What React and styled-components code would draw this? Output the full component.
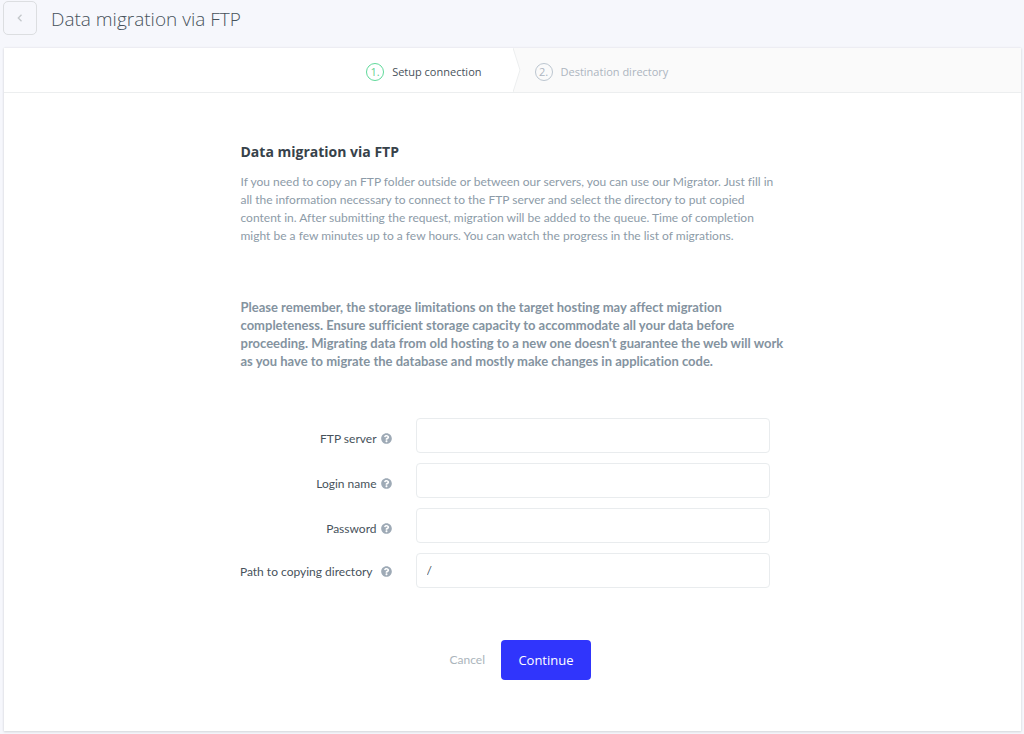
import React, { useState } from 'react'
import styled, { createGlobalStyle } from 'styled-components'
import { FaQuestionCircle } from 'react-icons/fa'

const GlobalStyle = createGlobalStyle`
  * {
    box-sizing: border-box;
  }
  body {
    margin: 0;
    background: #f6f7fc;
    color: #47525b;
    font-family: Lato, 'Open Sans', sans-serif;
    font-size: 12px;
    font-variant-ligatures: none;
    line-height: 18px;
  }
  button, input {
    font: inherit;
    font-variant-ligatures: none;
  }
`
const Page = styled.div`
  display: flex;
  flex-direction: column;
  min-height: 100vh;
  padding: 1px 3px 3px 4px;
`
const TopBar = styled.header`
  display: flex;
  align-items: center;
  gap: 14px;
  height: 34px;
  margin-bottom: 13px;
`
const BackButton = styled.button`
  display: flex;
  align-items: center;
  justify-content: center;
  width: 34px;
  height: 34px;
  margin-left: -1px;
  padding: 0;
  border: 1px solid #dcdee1;
  border-radius: 5px;
  background: transparent;
  color: #c3c7cb;
`
const PageTitle = styled.h1`
  margin: 0;
  padding-top: 2px;
  font-family: 'Open Sans', sans-serif;
  font-size: 19px;
  font-weight: 300;
  line-height: 26px;
`
const Panel = styled.main`
  flex: 1;
  background: #fff;
  box-shadow: 0 0 2px #dfe1e5, 0 1px 2px #d3d5d8;
`
const Steps = styled.ol`
  display: flex;
  margin: 0;
  padding: 0;
  height: 45px;
  border-bottom: 1px solid #eceeef;
  list-style: none;
`
const Step = styled.li`
  display: flex;
  align-items: center;
  justify-content: ${props => (props.$active ? 'flex-end' : 'flex-start')};
  gap: 8px;
  width: 50%;
  padding-top: 3px;
  padding-right: ${props => (props.$active ? '31px' : '0')};
  background: ${props => (props.$active ? '#fff' : '#fafafa')};
  color: ${props => (props.$active ? '#47525b' : '#adb5bf')};
  font-family: 'Open Sans', sans-serif;
  font-size: 11px;
`
const StepNumber = styled.span`
  display: flex;
  align-items: center;
  justify-content: center;
  width: 18px;
  height: 18px;
  border: 1px solid ${props => (props.$active ? '#5fd99a' : '#bcc6d0')};
  border-radius: 50%;
  color: ${props => (props.$active ? '#5fd08f' : '#adb5bf')};
`
const Arrow = styled.svg`
  flex: none;
  width: 8px;
  height: 44px;
  margin: -3px 6px 0 0;
`
const Content = styled.section`
  width: 544px;
  max-width: 100%;
  margin: 0 auto;
  padding: 49px 0 51px;
`
const Heading = styled.h2`
  margin: 0 0 11px;
  color: #37424a;
  font-family: 'Open Sans', sans-serif;
  font-size: 14px;
  font-weight: 700;
  line-height: 20px;
`
const Text = styled.p`
  margin: 0 0 53px;
  color: #8d9ba8;
  white-space: nowrap;
`
const Warning = styled(Text)`
  margin-bottom: 48px;
  color: #84939f;
  font-size: 13px;
  font-weight: 700;
`
const Form = styled.form`
  display: flex;
  flex-direction: column;
  gap: 10px;
`
const Row = styled.div`
  display: grid;
  grid-template-columns: 151px 354px;
  column-gap: 24px;
  align-items: center;
`
const Label = styled.label`
  display: flex;
  align-items: center;
  justify-content: flex-end;
  gap: ${props => (props.$wide ? '8px' : '4px')};
  padding-top: ${props => (props.$wide ? '2px' : '6px')};
  white-space: nowrap;
`
const HelpIcon = styled(FaQuestionCircle)`
  flex: none;
  width: 11px;
  height: 11px;
  color: #9eaab6;
`
const Input = styled.input`
  width: 100%;
  height: 35px;
  padding: 0 10px;
  border: 1px solid #e9ecee;
  border-radius: 4px;
  outline: none;
  background: #fff;
  color: #47525b;
`
const Buttons = styled.div`
  display: flex;
  align-items: center;
  gap: 16px;
  margin: 42px 0 0 209px;
`
const CancelLink = styled.a`
  color: #abb5bc;
  text-decoration: none;
`
const SubmitButton = styled.button`
  width: 90px;
  height: 40px;
  padding: 0;
  border: 0;
  border-radius: 4px;
  background: #3035fc;
  color: #fff;
  font-family: 'Open Sans', sans-serif;
  font-size: 13px;
`

const intro = [
  'If you need to copy an FTP folder outside or between our servers, you can use our Migrator. Just fill in',
  'all the information necessary to connect to the FTP server and select the directory to put copied',
  'content in. After submitting the request, migration will be added to the queue. Time of completion',
  'might be a few minutes up to a few hours. You can watch the progress in the list of migrations.',
]
const warning = [
  'Please remember, the storage limitations on the target hosting may affect migration',
  'completeness. Ensure sufficient storage capacity to accommodate all your data before',
  "proceeding. Migrating data from old hosting to a new one doesn't guarantee the web will work",
  'as you have to migrate the database and mostly make changes in application code.',
]
const fields = [
  { ident: 'server', display: 'FTP server' },
  { ident: 'login', display: 'Login name' },
  { ident: 'password', display: 'Password', type: 'password' },
  { ident: 'path', display: 'Path to copying directory', wide: true },
]

const renderLines = lines =>
  lines.map((line, index) => (
    <React.Fragment key={line}>
      {index > 0 && <br />}
      {line}
    </React.Fragment>
  ))

const App = () => {
  const [values, setValues] = useState({
    server: '',
    login: '',
    password: '',
    path: '/',
  })

  return (
    <Page>
      <GlobalStyle />
      <TopBar>
        <BackButton type="button" aria-label="Back">
          <svg width="6" height="8" viewBox="0 0 6 8" fill="none">
            <path d="M4.5 .8 1.3 4l3.2 3.2" stroke="currentColor" strokeWidth="1.3" />
          </svg>
        </BackButton>
        <PageTitle>Data migration via FTP</PageTitle>
      </TopBar>
      <Panel>
        <Steps>
          <Step $active>
            <StepNumber $active>1.</StepNumber>
            Setup connection
          </Step>
          <Step>
            <Arrow viewBox="0 0 8 44">
              <path d="M0 0 7 22 0 44z" fill="#fff" />
              <path d="M0 0 7 22 0 44" fill="none" stroke="#eceeef" />
            </Arrow>
            <StepNumber>2.</StepNumber>
            Destination directory
          </Step>
        </Steps>
        <Content>
          <Heading>Data migration via FTP</Heading>
          <Text>{renderLines(intro)}</Text>
          <Warning>{renderLines(warning)}</Warning>
          <Form onSubmit={e => e.preventDefault()}>
            {fields.map(({ ident, display, type = 'text', wide }) => (
              <Row key={ident}>
                <Label htmlFor={ident} $wide={wide}>
                  {display}
                  <HelpIcon />
                </Label>
                <Input
                  id={ident}
                  type={type}
                  value={values[ident]}
                  onChange={e => setValues({ ...values, [ident]: e.target.value })}
                />
              </Row>
            ))}
            <Buttons>
              <CancelLink href="#">Cancel</CancelLink>
              <SubmitButton type="submit">Continue</SubmitButton>
            </Buttons>
          </Form>
        </Content>
      </Panel>
    </Page>
  )
}

export default App
